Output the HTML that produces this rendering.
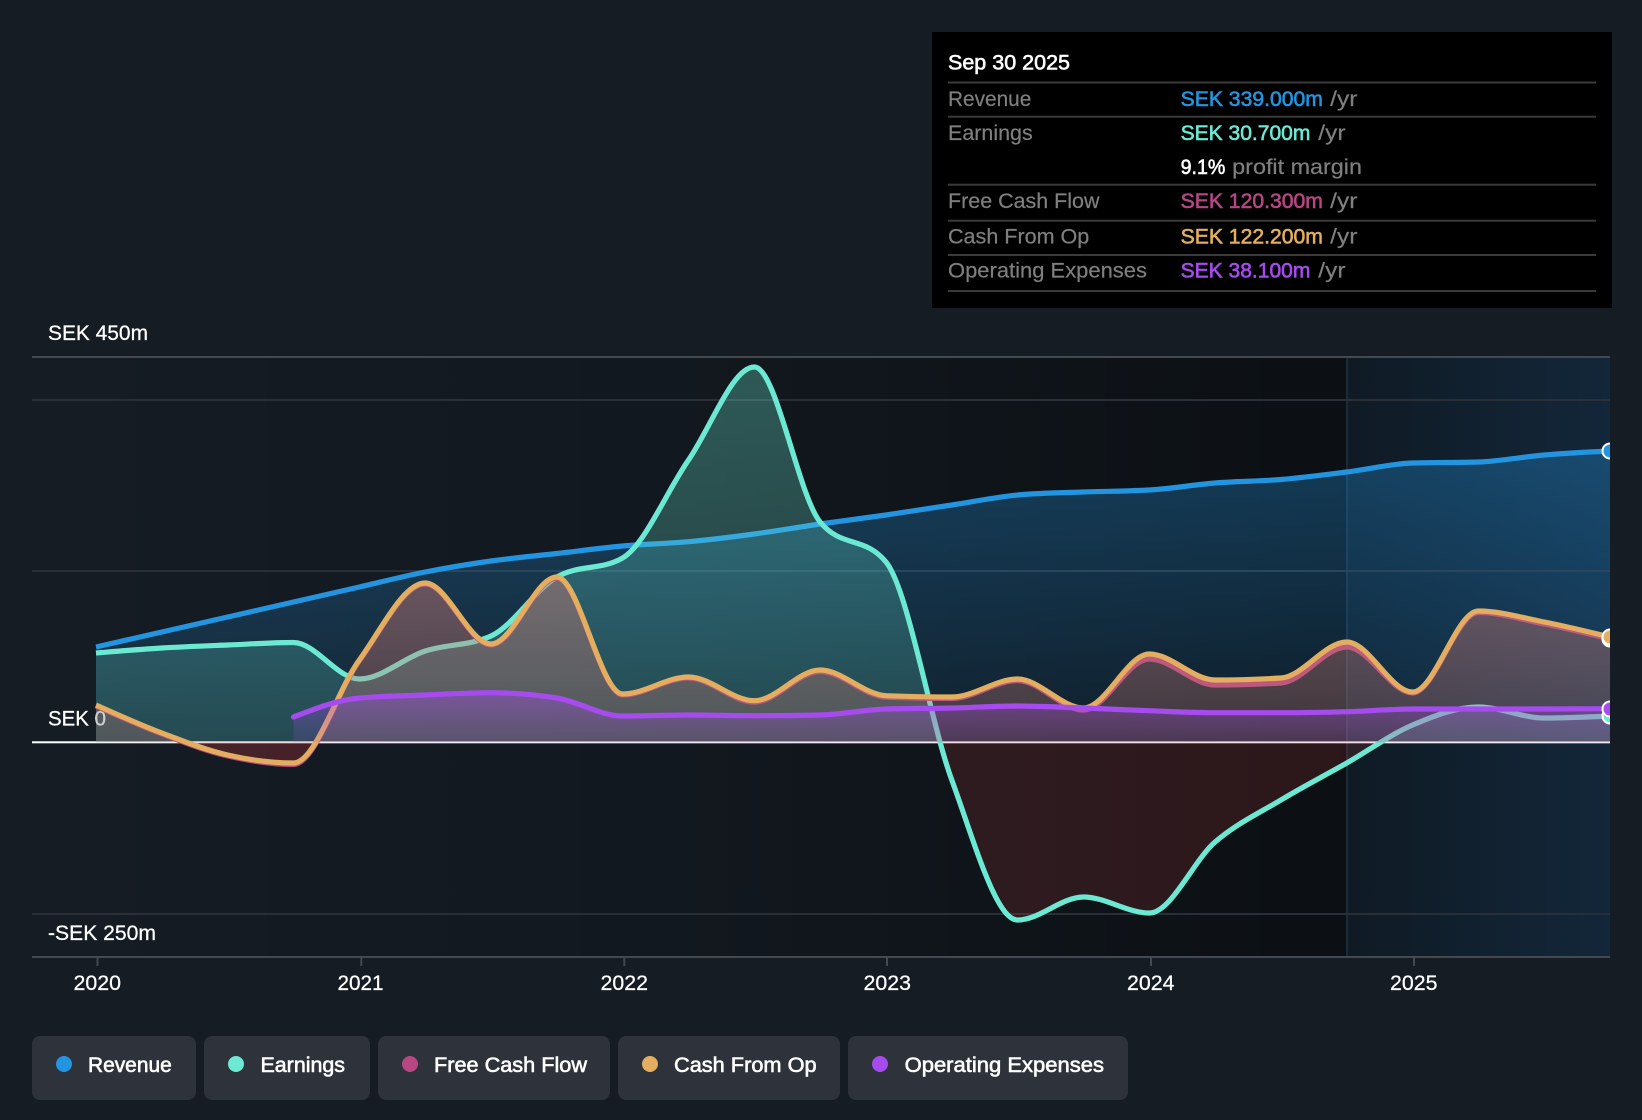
<!DOCTYPE html>
<html lang="en"><head><meta charset="utf-8"><title>Earnings and Revenue History</title>
<style>
html,body{margin:0;padding:0;background:#151c24;width:1642px;height:1120px;overflow:hidden}
svg{display:block;position:absolute;left:0;top:0}
text{font-family:"Liberation Sans",sans-serif;font-size:21px;fill:#fff}
.a{font-size:21.5px;stroke:#fff;stroke-width:.25px}
.m{stroke-width:.6px;paint-order:stroke}
.g{fill:#7f7f7f;stroke:#7f7f7f;stroke-width:.2px}
.l{fill:none;stroke-width:5.2;stroke-linecap:butt;stroke-linejoin:round}
.d{stroke:#fff;stroke-width:2}
</style></head><body>
<svg width="1642" height="1120" viewBox="0 0 1642 1120" xmlns="http://www.w3.org/2000/svg">
<defs>
<linearGradient id="bgL" x1="32" x2="1347" y1="0" y2="0" gradientUnits="userSpaceOnUse"><stop offset="0" stop-color="#000" stop-opacity="0"/><stop offset=".5" stop-color="#000" stop-opacity=".15"/><stop offset="1" stop-color="#000" stop-opacity=".45"/></linearGradient>
<linearGradient id="bgR" x1="1347" x2="1610" y1="0" y2="0" gradientUnits="userSpaceOnUse"><stop offset="0" stop-color="#0f1a24"/><stop offset="1" stop-color="#13273a"/></linearGradient>
<linearGradient id="fB" x1="0" x2="0" y1="450" y2="742" gradientUnits="userSpaceOnUse"><stop offset="0" stop-color="#2394df" stop-opacity=".33"/><stop offset="1" stop-color="#2394df" stop-opacity=".1"/></linearGradient>
<linearGradient id="fT" x1="0" x2="0" y1="357" y2="742" gradientUnits="userSpaceOnUse"><stop offset="0" stop-color="#6ce9d3" stop-opacity=".32"/><stop offset="1" stop-color="#6ce9d3" stop-opacity=".18"/></linearGradient>
<linearGradient id="fP" x1="0" x2="0" y1="580" y2="742" gradientUnits="userSpaceOnUse"><stop offset="0" stop-color="#b64783" stop-opacity=".3"/><stop offset="1" stop-color="#b64783" stop-opacity=".13"/></linearGradient>
<linearGradient id="fO" x1="0" x2="0" y1="580" y2="742" gradientUnits="userSpaceOnUse"><stop offset="0" stop-color="#e3ae60" stop-opacity=".22"/><stop offset="1" stop-color="#e3ae60" stop-opacity=".13"/></linearGradient>
<linearGradient id="fV" x1="0" x2="0" y1="697" y2="742" gradientUnits="userSpaceOnUse"><stop offset="0" stop-color="#a64bee" stop-opacity=".38"/><stop offset="1" stop-color="#a64bee" stop-opacity=".12"/></linearGradient>
<clipPath id="pos"><rect x="32" y="340" width="1578" height="402.3"/></clipPath>
<clipPath id="neg"><rect x="32" y="742.3" width="1578" height="215"/></clipPath>
<clipPath id="all"><rect x="32" y="340" width="1578" height="620"/></clipPath>
<path id="aB" d="M96 647C118 642 139.9 637 161.8 632S205.7 622 227.7 617S271.6 607 293.5 602S337.4 592 359.3 587S403.2 576.3 425.2 572S469 564.1 491 561S534.9 556 556.8 553.5S600.7 548 622.6 546S666.5 543.7 688.5 541.7S732.4 537 754.3 534S798.2 527.2 820.1 524S864 518.2 886 515S929.9 508.3 951.8 505S995.7 497 1017.6 495S1061.5 492.8 1083.5 492S1127.4 491.3 1149.3 490S1193.2 484.8 1215.1 483S1259 481.3 1280.9 479.5S1324.8 474.8 1346.8 472S1390.7 463.7 1412.6 463S1456.5 462.7 1478.4 462S1522.3 456.8 1544.3 455S1588.1 452 1610 451L1610 742.3L96 742.3Z"/>
<path id="aT" d="M96 653C118 651.2 139.9 649.3 161.8 648S205.7 645.9 227.7 645S271.6 642.5 293.5 642.5S337.4 679 359.3 679S403.2 658.2 425.2 651S469 646 491 636S534.9 589.7 556.8 577S600.7 570.7 622.6 558S666.5 491.7 688.5 460S732.4 367 754.3 367S798.2 495.3 820.1 522S864 535.3 886 562S929.9 720.3 951.8 780S995.7 920 1017.6 920S1061.5 897 1083.5 897S1127.4 913 1149.3 913S1193.2 860.8 1215.1 842S1259 813.2 1280.9 800S1324.8 775.5 1346.8 763S1390.7 734.3 1412.6 725S1456.5 707 1478.4 707S1522.3 718 1544.3 718S1588.1 717 1610 716L1610 742.3L96 742.3Z"/>
<path id="aP" d="M96 706C118 716 139.9 725.7 161.8 734S205.7 751 227.7 756S271.6 764.5 293.5 764.5S337.4 691 359.3 661S403.2 584 425.2 584S469 645 491 645S534.9 578 556.8 578S600.7 695 622.6 695S666.5 678 688.5 678S732.4 702.2 754.3 702.2S798.2 671.5 820.1 671.5S864 696.3 886 697.2S929.9 698.5 951.8 698.5S995.7 680.5 1017.6 680.5S1061.5 710 1083.5 710S1127.4 659 1149.3 659S1193.2 685 1215.1 685S1259 684.3 1280.9 683S1324.8 647 1346.8 647S1390.7 693 1412.6 693S1456.5 612.5 1478.4 612.5S1522.3 619.7 1544.3 624S1588.1 633.7 1610 639L1610 742.3L96 742.3Z"/>
<path id="aO" d="M96 705C118 714.8 139.9 724.7 161.8 733S205.7 750 227.7 755S271.6 763 293.5 763S337.4 690 359.3 660S403.2 583 425.2 583S469 644 491 644S534.9 577 556.8 577S600.7 694 622.6 694S666.5 677 688.5 677S732.4 700.7 754.3 700.7S798.2 670 820.1 670S864 694.8 886 695.7S929.9 697 951.8 697S995.7 679 1017.6 679S1061.5 708 1083.5 708S1127.4 654 1149.3 654S1193.2 680 1215.1 680S1259 679.3 1280.9 678S1324.8 642 1346.8 642S1390.7 692 1412.6 692S1456.5 611 1478.4 611S1522.3 617.7 1544.3 622S1588.1 631.7 1610 637L1610 742.3L96 742.3Z"/>
<path id="aV" d="M293.5 717C315.5 708.5 337.4 700 359.3 698S403.2 695.9 425.2 695S469 692.7 491 692.7S534.9 694.5 556.8 698S600.7 716 622.6 716S666.5 715 688.5 715S732.4 715.7 754.3 715.7S798.2 715.5 820.1 715S864 709.7 886 709S929.9 708.5 951.8 708S995.7 706 1017.6 706S1061.5 707.2 1083.5 708S1127.4 709.9 1149.3 710.7S1193.2 712.7 1215.1 712.7S1259 712.7 1280.9 712.7S1324.8 712.3 1346.8 711.7S1390.7 709 1412.6 709S1456.5 709 1478.4 709S1522.3 709 1544.3 709S1588.1 708.8 1610 708.7L1610 742.3L293.5 742.3Z"/>
</defs>
<rect width="1642" height="1120" fill="#151c24"/>
<!-- chart backgrounds -->
<rect x="32" y="357" width="1315" height="600" fill="url(#bgL)"/>
<rect x="1347" y="357" width="263" height="600" fill="url(#bgR)"/>
<rect x="1346" y="357" width="2" height="600" fill="#1a2b3a"/>
<!-- grid -->
<g fill="#2a2e36">
<rect x="32" y="399" width="1578" height="2"/><rect x="32" y="570" width="1578" height="2"/><rect x="32" y="913" width="1578" height="2"/>
</g>
<g fill="#44484f">
<rect x="32" y="356" width="1578" height="2"/><rect x="32" y="956" width="1578" height="2"/>
<rect x="96.500" y="957" width="2" height="9"/><rect x="360.300" y="957" width="2" height="9"/><rect x="623.300" y="957" width="2" height="9"/><rect x="886" y="957" width="2" height="9"/><rect x="1150" y="957" width="2" height="9"/><rect x="1413" y="957" width="2" height="9"/>
</g>
<rect x="32" y="741.300" width="1578" height="2" fill="#fff"/>
<!-- axis labels -->
<text class="a" x="48" y="340" style="font-size:21.5px" textLength="100" lengthAdjust="spacingAndGlyphs">SEK 450m</text>
<text class="a" x="48" y="725.700" style="font-size:21.5px" textLength="58" lengthAdjust="spacingAndGlyphs">SEK 0</text>
<text class="a" x="48" y="940" style="font-size:21.5px" textLength="108" lengthAdjust="spacingAndGlyphs">-SEK 250m</text>
<text class="a" x="73.500" y="990" style="font-size:21.5px" textLength="47.500" lengthAdjust="spacingAndGlyphs">2020</text>
<text class="a" x="337.500" y="990" style="font-size:21.5px" textLength="46" lengthAdjust="spacingAndGlyphs">2021</text>
<text class="a" x="600.500" y="990" style="font-size:21.5px" textLength="47.500" lengthAdjust="spacingAndGlyphs">2022</text>
<text class="a" x="863.500" y="990" style="font-size:21.5px" textLength="47.500" lengthAdjust="spacingAndGlyphs">2023</text>
<text class="a" x="1127" y="990" style="font-size:21.5px" textLength="47.500" lengthAdjust="spacingAndGlyphs">2024</text>
<text class="a" x="1390" y="990" style="font-size:21.5px" textLength="47.500" lengthAdjust="spacingAndGlyphs">2025</text>
<!-- series -->
<g clip-path="url(#all)">
<use href="#aB" fill="url(#fB)"/>
<path class="l" stroke="#2394df" d="M96 647C118 642 139.9 637 161.8 632S205.7 622 227.7 617S271.6 607 293.5 602S337.4 592 359.3 587S403.2 576.3 425.2 572S469 564.1 491 561S534.9 556 556.8 553.5S600.7 548 622.6 546S666.5 543.7 688.5 541.7S732.4 537 754.3 534S798.2 527.2 820.1 524S864 518.2 886 515S929.9 508.3 951.8 505S995.7 497 1017.6 495S1061.5 492.8 1083.5 492S1127.4 491.3 1149.3 490S1193.2 484.8 1215.1 483S1259 481.3 1280.9 479.5S1324.8 474.8 1346.8 472S1390.7 463.7 1412.6 463S1456.5 462.7 1478.4 462S1522.3 456.8 1544.3 455S1588.1 452 1610 451"/>
<g clip-path="url(#pos)"><use href="#aT" fill="url(#fT)"/></g>
<g clip-path="url(#neg)"><use href="#aT" fill="#e64141" fill-opacity=".15"/></g>
<path class="l" stroke="#6ce9d3" d="M96 653C118 651.2 139.9 649.3 161.8 648S205.7 645.9 227.7 645S271.6 642.5 293.5 642.5S337.4 679 359.3 679S403.2 658.2 425.2 651S469 646 491 636S534.9 589.7 556.8 577S600.7 570.7 622.6 558S666.5 491.7 688.5 460S732.4 367 754.3 367S798.2 495.3 820.1 522S864 535.3 886 562S929.9 720.3 951.8 780S995.7 920 1017.6 920S1061.5 897 1083.5 897S1127.4 913 1149.3 913S1193.2 860.8 1215.1 842S1259 813.2 1280.9 800S1324.8 775.5 1346.8 763S1390.7 734.3 1412.6 725S1456.5 707 1478.4 707S1522.3 718 1544.3 718S1588.1 717 1610 716"/>
<g clip-path="url(#pos)"><use href="#aP" fill="url(#fP)"/></g>
<g clip-path="url(#neg)"><use href="#aP" fill="#e64141" fill-opacity=".13"/></g>
<path class="l" stroke="#b64783" d="M96 706C118 716 139.9 725.7 161.8 734S205.7 751 227.7 756S271.6 764.5 293.5 764.5S337.4 691 359.3 661S403.2 584 425.2 584S469 645 491 645S534.9 578 556.8 578S600.7 695 622.6 695S666.5 678 688.5 678S732.4 702.2 754.3 702.2S798.2 671.5 820.1 671.5S864 696.3 886 697.2S929.9 698.5 951.8 698.5S995.7 680.5 1017.6 680.5S1061.5 710 1083.5 710S1127.4 659 1149.3 659S1193.2 685 1215.1 685S1259 684.3 1280.9 683S1324.8 647 1346.8 647S1390.7 693 1412.6 693S1456.5 612.5 1478.4 612.5S1522.3 619.7 1544.3 624S1588.1 633.7 1610 639"/>
<g clip-path="url(#pos)"><use href="#aO" fill="url(#fO)"/></g>
<g clip-path="url(#neg)"><use href="#aO" fill="#e64141" fill-opacity=".13"/></g>
<path class="l" stroke="#e3ae60" d="M96 705C118 714.8 139.9 724.7 161.8 733S205.7 750 227.7 755S271.6 763 293.5 763S337.4 690 359.3 660S403.2 583 425.2 583S469 644 491 644S534.9 577 556.8 577S600.7 694 622.6 694S666.5 677 688.5 677S732.4 700.7 754.3 700.7S798.2 670 820.1 670S864 694.8 886 695.7S929.9 697 951.8 697S995.7 679 1017.6 679S1061.5 708 1083.5 708S1127.4 654 1149.3 654S1193.2 680 1215.1 680S1259 679.3 1280.9 678S1324.8 642 1346.8 642S1390.7 692 1412.6 692S1456.5 611 1478.4 611S1522.3 617.7 1544.3 622S1588.1 631.7 1610 637"/>
<use href="#aV" fill="url(#fV)"/>
<path class="l" stroke="#a64bee" style="stroke-linecap:round" d="M293.5 717C315.5 708.5 337.4 700 359.3 698S403.2 695.9 425.2 695S469 692.7 491 692.7S534.9 694.5 556.8 698S600.7 716 622.6 716S666.5 715 688.5 715S732.4 715.7 754.3 715.7S798.2 715.5 820.1 715S864 709.7 886 709S929.9 708.5 951.8 708S995.7 706 1017.6 706S1061.5 707.2 1083.5 708S1127.4 709.9 1149.3 710.7S1193.2 712.7 1215.1 712.7S1259 712.7 1280.9 712.7S1324.8 712.3 1346.8 711.7S1390.7 709 1412.6 709S1456.5 709 1478.4 709S1522.3 709 1544.3 709S1588.1 708.8 1610 708.7"/>
<circle class="d" cx="1610" cy="451" r="7.5" fill="#2394df"/>
<circle class="d" cx="1610" cy="716" r="7.5" fill="#6ce9d3"/>
<circle class="d" cx="1610" cy="639" r="7.5" fill="#b64783"/>
<circle class="d" cx="1610" cy="637" r="7.5" fill="#e3ae60"/>
<circle class="d" cx="1610" cy="709" r="7.5" fill="#a64bee"/>
</g>
<!-- tooltip -->
<rect x="932" y="32" width="680" height="276" fill="#000"/>
<g fill="#3a3a3a">
<rect x="948" y="81.500" width="648" height="2"/><rect x="948" y="115.700" width="648" height="2"/><rect x="948" y="183.700" width="648" height="2"/><rect x="948" y="219.700" width="648" height="2"/><rect x="948" y="254" width="648" height="2"/><rect x="948" y="290" width="648" height="2"/>
</g>
<text x="948" y="69.300" class="m" stroke="#fff" textLength="122" lengthAdjust="spacingAndGlyphs">Sep 30 2025</text>
<text class="g" x="948" y="106" textLength="83.300" lengthAdjust="spacingAndGlyphs">Revenue</text>
<text class="g" x="948" y="140" textLength="84.700" lengthAdjust="spacingAndGlyphs">Earnings</text>
<text class="g" x="948" y="208" textLength="151.500" lengthAdjust="spacingAndGlyphs">Free Cash Flow</text>
<text class="g" x="948" y="243.300" textLength="141.300" lengthAdjust="spacingAndGlyphs">Cash From Op</text>
<text class="g" x="948" y="277.700" textLength="199" lengthAdjust="spacingAndGlyphs">Operating Expenses</text>
<text class="m" x="1180.600" y="106" style="fill:#2394df" stroke="#2394df" textLength="142.300" lengthAdjust="spacingAndGlyphs">SEK 339.000m</text>
<text class="g" x="1330.200" y="106" textLength="27.200" lengthAdjust="spacingAndGlyphs">/yr</text>
<text class="m" x="1180.600" y="140" style="fill:#6ce9d3" stroke="#6ce9d3" textLength="129.800" lengthAdjust="spacingAndGlyphs">SEK 30.700m</text>
<text class="g" x="1318.300" y="140" textLength="27.200" lengthAdjust="spacingAndGlyphs">/yr</text>
<text class="m" x="1180.600" y="174" stroke="#fff" textLength="44.700" lengthAdjust="spacingAndGlyphs">9.1%</text>
<text class="g m" x="1232.200" y="174" textLength="129.800" lengthAdjust="spacingAndGlyphs">profit margin</text>
<text class="m" x="1180.600" y="208" style="fill:#b64783" stroke="#b64783" textLength="142.300" lengthAdjust="spacingAndGlyphs">SEK 120.300m</text>
<text class="g" x="1330.200" y="208" textLength="27.200" lengthAdjust="spacingAndGlyphs">/yr</text>
<text class="m" x="1180.600" y="243.300" style="fill:#e3ae60" stroke="#e3ae60" textLength="142.300" lengthAdjust="spacingAndGlyphs">SEK 122.200m</text>
<text class="g" x="1330.200" y="243.300" textLength="27.200" lengthAdjust="spacingAndGlyphs">/yr</text>
<text class="m" x="1180.600" y="277.700" style="fill:#a64bee" stroke="#a64bee" textLength="129.800" lengthAdjust="spacingAndGlyphs">SEK 38.100m</text>
<text class="g" x="1318.300" y="277.700" textLength="27.200" lengthAdjust="spacingAndGlyphs">/yr</text>
<!-- legend -->
<g fill="#2d323b">
<rect x="32" y="1036" width="164" height="64" rx="8"/>
<rect x="204" y="1036" width="166" height="64" rx="8"/>
<rect x="378" y="1036" width="232" height="64" rx="8"/>
<rect x="618" y="1036" width="222" height="64" rx="8"/>
<rect x="848" y="1036" width="280" height="64" rx="8"/>
</g>
<circle cx="64" cy="1064" r="8" fill="#2394df"/>
<circle cx="236" cy="1064" r="8" fill="#6ce9d3"/>
<circle cx="410" cy="1064" r="8" fill="#b64783"/>
<circle cx="650" cy="1064" r="8" fill="#e3ae60"/>
<circle cx="880" cy="1064" r="8" fill="#a64bee"/>
<text class="m" stroke="#fff" x="88" y="1072" textLength="83.700" lengthAdjust="spacingAndGlyphs">Revenue</text>
<text class="m" stroke="#fff" x="260.500" y="1072" textLength="84.500" lengthAdjust="spacingAndGlyphs">Earnings</text>
<text class="m" stroke="#fff" x="434" y="1072" textLength="153" lengthAdjust="spacingAndGlyphs">Free Cash Flow</text>
<text class="m" stroke="#fff" x="674" y="1072" textLength="142.600" lengthAdjust="spacingAndGlyphs">Cash From Op</text>
<text class="m" stroke="#fff" x="904.600" y="1072" textLength="199.400" lengthAdjust="spacingAndGlyphs">Operating Expenses</text>
</svg>
</body></html>
